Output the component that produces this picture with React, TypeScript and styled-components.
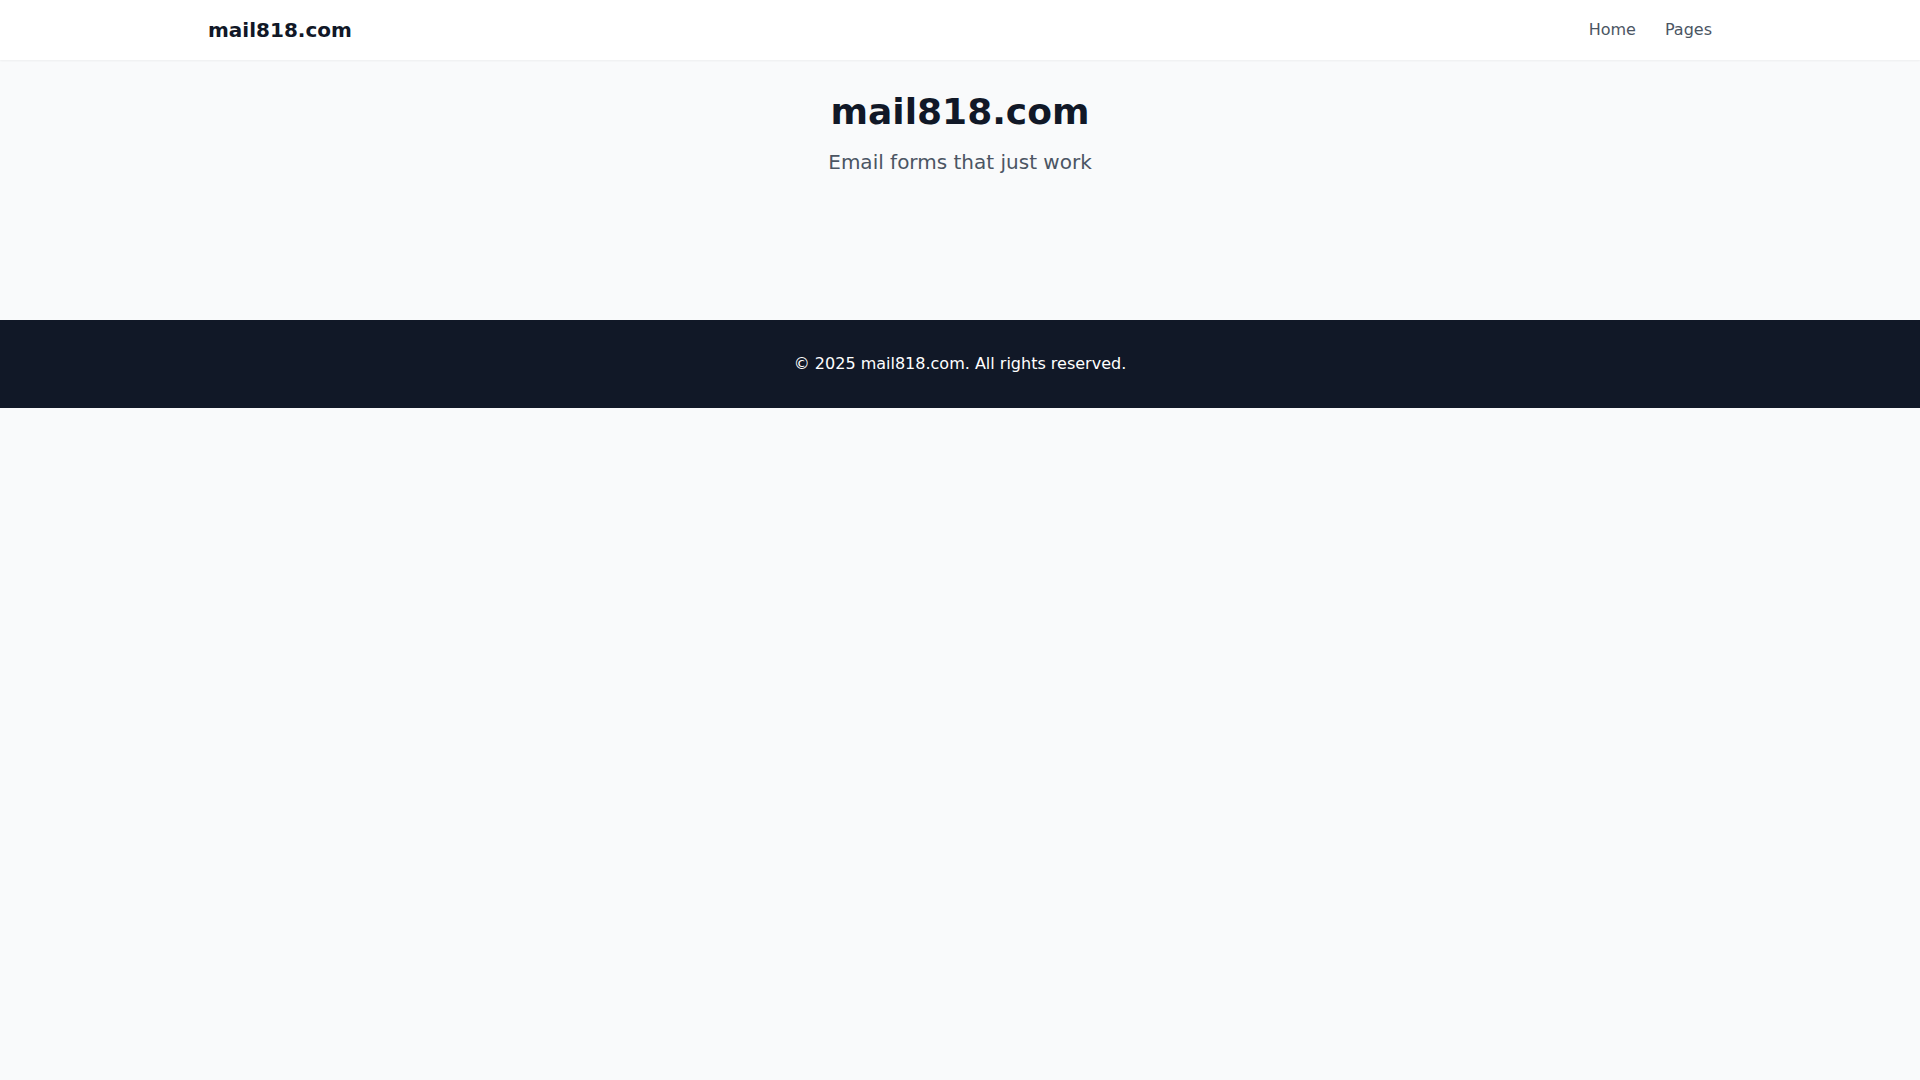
import styled, { createGlobalStyle } from "styled-components";

const GlobalStyle = createGlobalStyle`
    html, body {
        margin: 0;
        padding: 0;
        background-color: #f9fafb;
        font-family: "DejaVu Sans", "Liberation Sans", sans-serif;
    }

    * {
        box-sizing: border-box;
    }
`;

const Header = styled.header`
    background-color: #ffffff;
    box-shadow: 0 1px 2px 0 rgba(0, 0, 0, 0.05);
`;

const Container = styled.div`
    max-width: 1536px;
    margin: 0 auto;
    padding: 0 16px;
`;

const HeaderRow = styled(Container)`
    display: flex;
    align-items: center;
    justify-content: space-between;
    padding-top: 16px;
    padding-bottom: 16px;
`;

const Logo = styled.a`
    font-size: 20px;
    line-height: 28px;
    font-weight: 700;
    color: #111827;
    text-decoration: none;
`;

const Nav = styled.nav`
    display: flex;
    gap: 29px;
`;

const NavLink = styled.a`
    font-size: 16px;
    line-height: 24px;
    color: #4b5563;
    text-decoration: none;
`;

const Main = styled.main`
    padding: 32px 0 144px;
`;

const Hero = styled.section`
    display: flex;
    flex-direction: column;
    align-items: center;
    text-align: center;
`;

const Title = styled.h1`
    margin: 0 0 16px;
    font-size: 36px;
    line-height: 40px;
    font-weight: 700;
    color: #111827;
`;

const Subtitle = styled.p`
    margin: 0;
    font-size: 20px;
    line-height: 28px;
    color: #4b5563;
`;

const Footer = styled.footer`
    background-color: #111827;
    color: #ffffff;
    padding: 32px 0;
    text-align: center;
`;

const FooterText = styled.p`
    margin: 0;
    font-size: 16px;
    line-height: 24px;
`;

export default function App() {
    return (
        <>
            <GlobalStyle />
            <Header>
                <HeaderRow>
                    <Logo href="#">mail818.com</Logo>
                    <Nav>
                        <NavLink href="#">Home</NavLink>
                        <NavLink href="#">Pages</NavLink>
                    </Nav>
                </HeaderRow>
            </Header>
            <Main>
                <Hero>
                    <Title>mail818.com</Title>
                    <Subtitle>Email forms that just work</Subtitle>
                </Hero>
            </Main>
            <Footer>
                <Container>
                    <FooterText>© 2025 mail818.com. All rights reserved.</FooterText>
                </Container>
            </Footer>
        </>
    );
}
